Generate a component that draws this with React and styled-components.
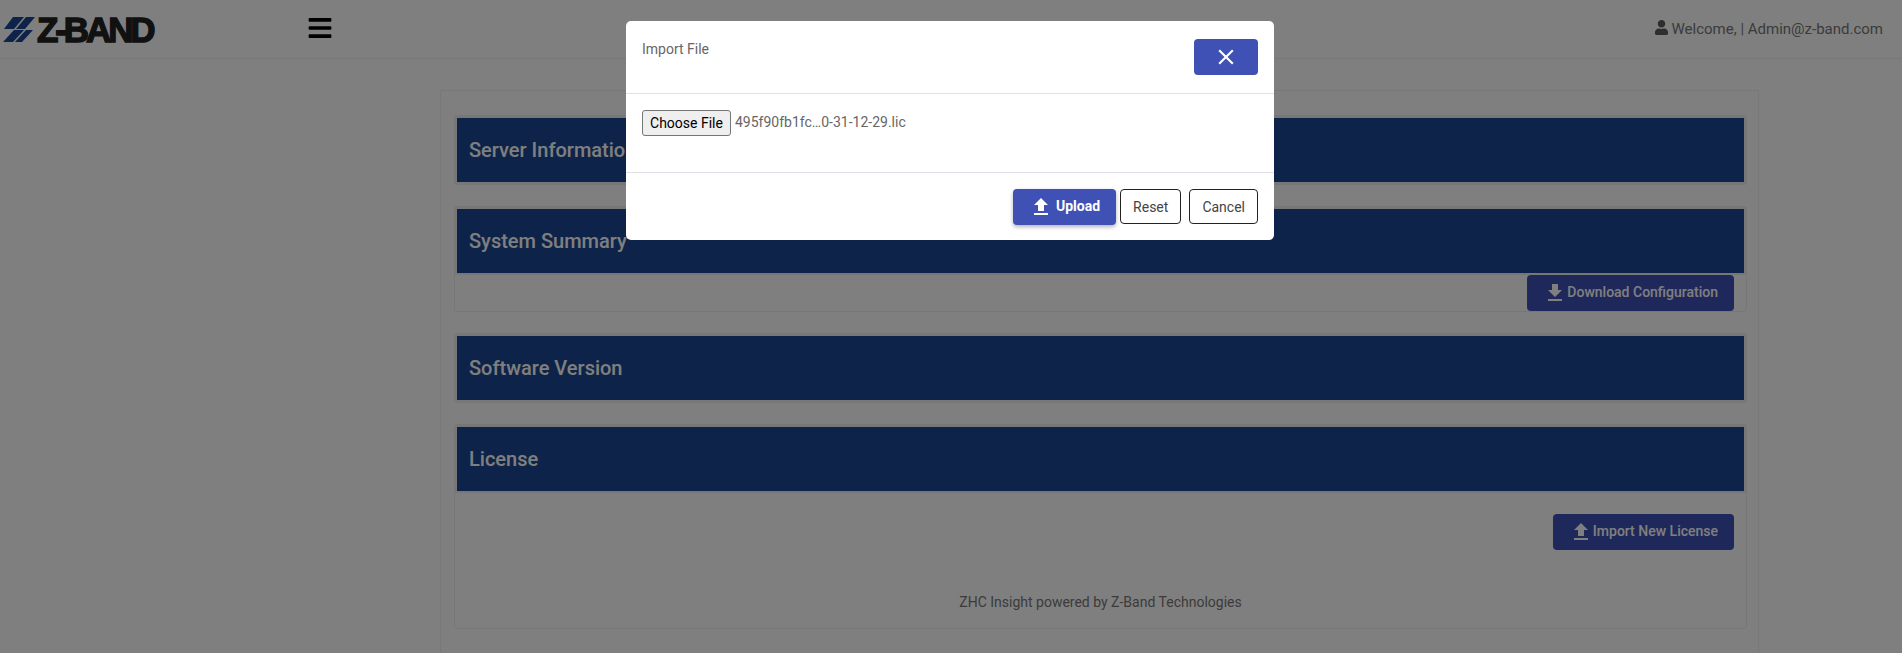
import React from 'react'
import styled, {createGlobalStyle} from 'styled-components'
import {FaBars, FaUser} from 'react-icons/fa'
import {MdClose, MdFileDownload, MdFileUpload} from 'react-icons/md'

const GlobalStyle = createGlobalStyle`
  html, body {
    margin: 0;
    height: 100%;
    overflow: hidden;
    background: #fff;
    font-family: Roboto, "Liberation Sans", sans-serif;
    font-size: 14px;
  }
  * { box-sizing: border-box; }
`

export default function App(){
    return (
        <>
            <GlobalStyle />
            <NavBar>
                <Logo>
                    <svg width="32" height="25" viewBox="0 0 32 25">
                        <polygon points="10,0 21,0 11,12 1,12" fill="#1c4692" />
                        <polygon points="23,0 32,0 22,12 13,12" fill="#1c4692" />
                        <polygon points="11,13 21,13 10,25 0,25" fill="#1c4692" />
                        <polygon points="23,13 30,13 19,25 12,25" fill="#1c4692" />
                    </svg>
                    <LogoText>Z-BAND</LogoText>
                </Logo>
                <MenuToggle><FaBars size={26} /></MenuToggle>
                <UserInfo>
                    <FaUser size={15} />
                    <span>Welcome, | Admin@z-band.com</span>
                </UserInfo>
            </NavBar>

            <Page>
                <Card>
                    <Section>
                        <SectionHeader>Server Information</SectionHeader>
                    </Section>
                    <Section>
                        <SectionHeader>System Summary</SectionHeader>
                        <ActionRow>
                            <PrimaryButton><MdFileDownload size={24} />Download Configuration</PrimaryButton>
                        </ActionRow>
                    </Section>
                    <Section>
                        <SectionHeader>Software Version</SectionHeader>
                    </Section>
                    <Section>
                        <SectionHeader>License</SectionHeader>
                        <ActionRow $top={21}>
                            <PrimaryButton><MdFileUpload size={24} />Import New License</PrimaryButton>
                        </ActionRow>
                        <Footer>ZHC Insight powered by Z-Band Technologies</Footer>
                    </Section>
                </Card>
            </Page>

            <Overlay>
                <Modal>
                    <ModalHeader>
                        <ModalTitle>Import File</ModalTitle>
                        <CloseButton><MdClose size={26} /></CloseButton>
                    </ModalHeader>
                    <ModalBody>
                        <FileButton>Choose File</FileButton>
                        <FileName>495f90fb1fc…0-31-12-29.lic</FileName>
                    </ModalBody>
                    <ModalFooter>
                        <UploadButton><MdFileUpload size={24} />Upload</UploadButton>
                        <OutlineButton>Reset</OutlineButton>
                        <OutlineButton>Cancel</OutlineButton>
                    </ModalFooter>
                </Modal>
            </Overlay>
        </>
    )
}

const NavBar = styled.header`
  height: 59px;
  display: flex;
  align-items: center;
  padding: 0 19px 0 3px;
  border-bottom: 1px solid #f0f0f0;
`

const Logo = styled.div`
  width: 304px;
  display: flex;
  align-items: center;
  gap: 2px;
`

const LogoText = styled.span`
  font-family: "Liberation Sans", sans-serif;
  font-weight: 700;
  font-size: 35px;
  line-height: 25px;
  letter-spacing: -3.1px;
  color: #222;
  -webkit-text-stroke: 1.4px #222;
`

const MenuToggle = styled.div`
  display: flex;
  margin-top: -2px;
  color: #000;
`

const UserInfo = styled.div`
  margin-left: auto;
  display: flex;
  align-items: center;
  gap: 3px;
  font-size: 15px;
  color: #777;

  svg {
    margin-top: -3px;
    color: #5c5c5c;
  }
`

const Page = styled.main`
  padding: 31px 143px 0 440px;
`

const Card = styled.div`
  border: 1px solid #f0f0f0;
  border-bottom: 0;
  padding: 24px 11px 25px 13px;
  display: flex;
  flex-direction: column;
  gap: 21px;
`

const Section = styled.section`
  border: 1px solid #eee;
  border-radius: 3px;
`

const SectionHeader = styled.h2`
  margin: 0;
  height: 68px;
  display: flex;
  align-items: center;
  padding-left: 12px;
  background: #1c4692;
  background-clip: padding-box;
  border: 2px solid #eee;
  color: #fff;
  font-size: 20px;
  font-weight: 500;
`

const ActionRow = styled.div`
  display: flex;
  justify-content: flex-end;
  padding: ${props => props.$top || 0}px 12px 0 0;
`

const PrimaryButton = styled.button`
  height: 36px;
  display: inline-flex;
  align-items: center;
  padding: 0 16px 2px;
  background: #3f51b5;
  border: 0;
  border-radius: 4px;
  color: #fff;
  font-family: inherit;
  font-size: 14px;
  font-weight: 500;

  svg { margin-top: 2px; }
`

const Footer = styled.p`
  margin: 44px 0 18px;
  text-align: center;
  font-size: 14px;
  line-height: 16px;
  color: #777;
`

const Overlay = styled.div`
  position: fixed;
  inset: 0;
  padding-right: 2px;
  background: rgba(0, 0, 0, 0.5);
`

const Modal = styled.div`
  width: 648px;
  margin: 21px auto 0;
  background: #fff;
  border-radius: 5px;
`

const ModalHeader = styled.div`
  height: 73px;
  display: flex;
  justify-content: space-between;
  align-items: flex-start;
  padding: 18px 16px 0;
  border-bottom: 1px solid #dee2e6;
`

const ModalTitle = styled.div`
  font-size: 14px;
  line-height: 20px;
  color: #666;
`

const CloseButton = styled.button`
  width: 64px;
  height: 36px;
  display: flex;
  align-items: center;
  justify-content: center;
  padding: 0;
  background: #3f51b5;
  border: 0;
  border-radius: 4px;
  color: #fff;
`

const ModalBody = styled.div`
  height: 79px;
  display: flex;
  align-items: flex-start;
  gap: 4px;
  padding: 16px;
  border-bottom: 1px solid #dee2e6;
`

const FileButton = styled.button`
  width: 89px;
  height: 26px;
  padding: 0;
  background: #efefef;
  border: 1px solid #767676;
  border-radius: 3px;
  color: #000;
  font-family: inherit;
  font-size: 14px;
`

const FileName = styled.span`
  line-height: 25px;
  font-size: 14px;
  color: #666;
`

const ModalFooter = styled.div`
  height: 67px;
  display: flex;
  justify-content: flex-end;
  align-items: flex-start;
  gap: 8px;
  padding: 16px;
`

const UploadButton = styled(PrimaryButton)`
  gap: 3px;
  margin-right: -4px;
  font-weight: 700;
  box-shadow: 0 2px 4px rgba(0, 0, 0, 0.3);
`

const OutlineButton = styled.button`
  height: 35px;
  padding: 0 12px;
  background: #fff;
  border: 1px solid #222;
  border-radius: 4px;
  color: #444;
  font-family: inherit;
  font-size: 14px;
`
